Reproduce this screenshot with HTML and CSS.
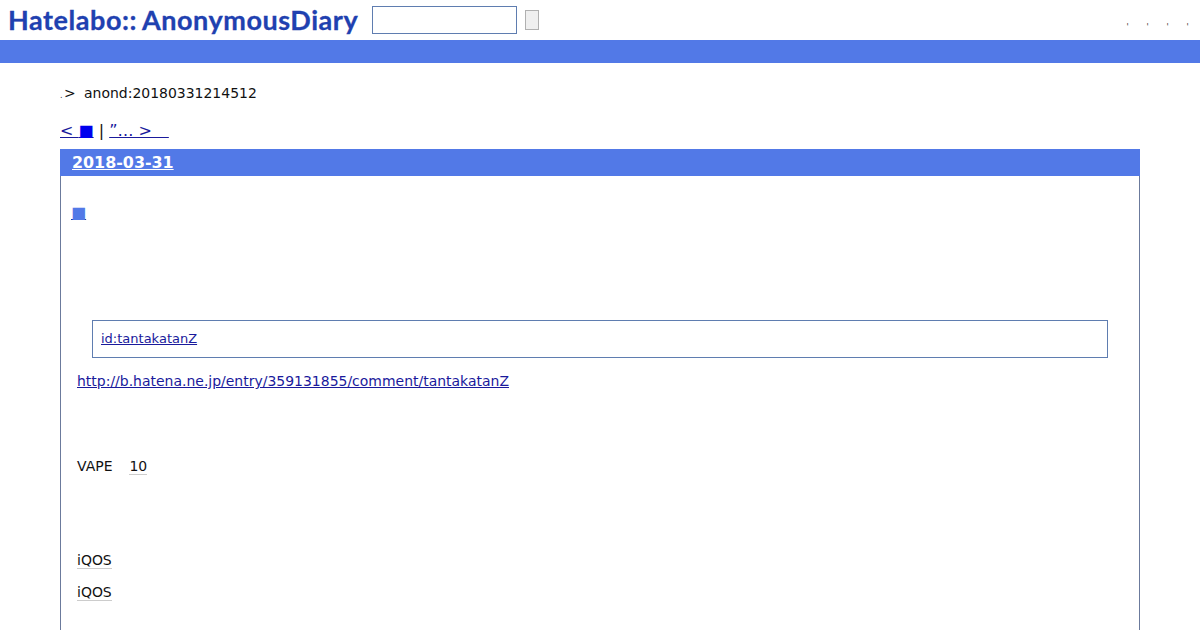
FILE: index.html
```html
<!DOCTYPE html>
<html lang="ja">
<head>
<meta charset="utf-8">
<title>anond:20180331214512</title>
<link rel="stylesheet" href="styles.css">
</head>
<body>
<header class="top">
  <a class="logo" href="#">Hatelabo::<span class="logo-name">AnonymousDiary</span></a>
  <form class="search">
    <input class="search-box" type="text">
    <button class="search-btn" type="button"></button>
  </form>
  <ul class="menu">
    <li><a href="#">'</a></li>
    <li><a href="#">'</a></li>
    <li><a href="#">'</a></li>
    <li><a href="#">'</a></li>
  </ul>
</header>
<div class="bar"></div>
<main class="page">
  <p class="crumb"><a class="crumb-home" href="#">.</a><span class="crumb-sep">&gt;</span><span>anond:20180331214512</span></p>
  <p class="pager"><a class="pager-prev" href="#">&lt; <span class="sq">■</span></a> | <a class="pager-next" href="#">”… &gt; &nbsp;&nbsp;&#8202;</a></p>
  <section class="day">
    <h2 class="day-title"><a href="#">2018-03-31</a></h2>
    <div class="body">
      <h3 class="entry-mark"><a href="#">■</a></h3>
      <blockquote class="quote"><a href="#">id:tantakatanZ</a></blockquote>
      <p class="line link-line"><a href="#">http://b.hatena.ne.jp/entry/359131855/comment/tantakatanZ</a></p>
      <p class="line vape">VAPE<span class="kw">10</span></p>
      <p class="line iqos"><span class="kw-first">iQOS</span></p>
      <p class="line iqos2"><span class="kw-first">iQOS</span></p>
    </div>
  </section>
</main>
</body>
</html>
```
FILE: styles.css
```css
html, body {
  margin: 0;
  padding: 0;
  background: #fff;
  height: 630px;
  overflow: hidden;
}
body {
  font-family: "DejaVu Sans", sans-serif;
  font-size: 13.97px;
  color: #111;
}
a { color: #1a1a9c; }
.top {
  height: 40px;
  display: flex;
  align-items: flex-start;
  box-sizing: border-box;
}
.logo {
  margin: 3px 0 0 8px;
  width: 350px;
  font-family: "Lato", sans-serif;
  font-weight: 700;
  font-size: 27px;
  line-height: 34px;
  letter-spacing: 0.55px;
  white-space: nowrap;
  color: #1f41b0;
  text-decoration: none;
  -webkit-text-stroke: 0.3px #1f41b0;
}
.logo-name { margin-left: 5px; }
.search {
  display: flex;
  align-items: center;
  margin: 6px 0 0 14px;
  gap: 8px;
}
.search-box {
  width: 145px;
  height: 28px;
  box-sizing: border-box;
  border: 1px solid #5f7db0;
  background: #fff;
  padding: 0;
  margin: 0;
}
.search-btn {
  width: 14px;
  height: 20px;
  box-sizing: border-box;
  border: 1px solid #b0b0b0;
  background: #efefef;
  border-radius: 0;
  padding: 0;
}
.menu {
  list-style: none;
  margin: 0 11px 0 auto;
  padding: 21px 0 0;
  display: flex;
  gap: 17px;
}
.menu li {
  width: 3px;
  font-size: 8px;
  line-height: 14px;
  text-align: center;
}
.menu a {
  color: #333;
  text-decoration: none;
}
.bar {
  height: 23px;
  background: #5279e7;
}
.page {
  padding: 0 60px;
}
.crumb {
  margin: 0;
  padding-top: 21px;
  height: 18px;
  line-height: 18px;
  display: flex;
  align-items: baseline;
  white-space: pre;
}
.crumb-home {
  font-size: 8px;
  color: #333;
  text-decoration: none;
  width: 4px;
}
.crumb-sep {
  width: 20px;
}
.pager {
  margin: 0;
  padding-top: 19px;
  font-size: 16px;
  line-height: 19px;
  height: 19px;
}
.sq { color: #0000ee; }
.day {
  margin-top: 9px;
  border: 1px solid #6b7a9c;
  border-top: 0;
  height: 500px;
}
.day-title {
  margin: 0 -1px;
  height: 27px;
  padding-left: 12px;
  background: #5279e7;
  font-size: 15.9px;
  line-height: 27px;
  font-weight: 700;
}
.day-title a { color: #fff; }
.body {
  padding: 0 16px;
}
.entry-mark {
  margin: 27px 0 0 -8px;
  font-size: 16px;
  line-height: 19px;
  font-weight: 400;
}
.entry-mark a { color: #5279e7; text-decoration-color: #1a3a9c; padding-left: 2px; }
.quote {
  margin: 98px 15px 0;
  height: 36px;
  padding: 0 8px;
  border: 1px solid #5f7db0;
  font-size: 13px;
  line-height: 36px;
}
.line {
  margin: 0;
  line-height: 18px;
}
.link-line { margin-top: 14px; }
.vape { margin-top: 67px; }
.iqos { margin-top: 76px; }
.iqos2 { margin-top: 14px; }
.kw {
  margin-left: 17px;
  border-bottom: 1px solid #ccc;
}
.kw-first {
  border-bottom: 1px solid #ccc;
}
```
